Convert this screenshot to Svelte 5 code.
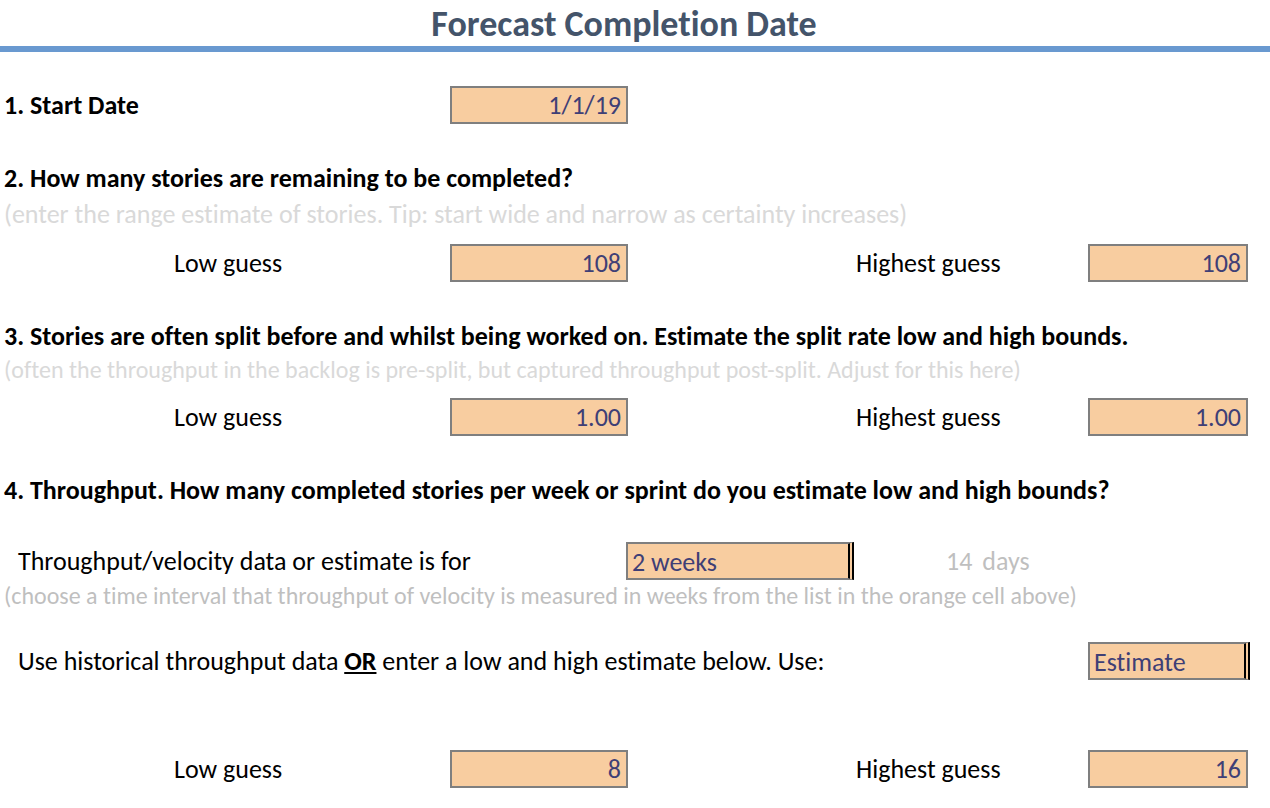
<script>
  let startDate = $state('1/1/19');
  let storiesLow = $state('108');
  let storiesHigh = $state('108');
  let splitLow = $state('1.00');
  let splitHigh = $state('1.00');
  let interval = $state('2 weeks');
  let source = $state('Estimate');
  let paceLow = $state('8');
  let paceHigh = $state('16');

  const days = $derived(parseInt(interval) * 7);
</script>

<main>
  <header><h1>Forecast Completion Date</h1></header>

  <section class="start">
    <div class="row">
      <h2 class="wide"><label for="start-date">1. Start Date</label></h2>
      <input id="start-date" class="cell low" bind:value={startDate} />
    </div>
  </section>

  <section>
    <h2>2. How many stories are remaining to be completed?</h2>
    <p class="hint roomy">(enter the range estimate of stories. Tip: start wide and narrow as certainty increases)</p>
    <div class="row">
      <label class="low-label" for="stories-low">Low guess</label>
      <input id="stories-low" class="cell low" bind:value={storiesLow} />
      <label class="high-label" for="stories-high">Highest guess</label>
      <input id="stories-high" class="cell high" bind:value={storiesHigh} />
    </div>
  </section>

  <section>
    <h2>3. Stories are often split before and whilst being worked on. Estimate the split rate low and high bounds.</h2>
    <p class="hint">(often the throughput in the backlog is pre-split, but captured throughput post-split. Adjust for this here)</p>
    <div class="row">
      <label class="low-label" for="split-low">Low guess</label>
      <input id="split-low" class="cell low" bind:value={splitLow} />
      <label class="high-label" for="split-high">Highest guess</label>
      <input id="split-high" class="cell high" bind:value={splitHigh} />
    </div>
  </section>

  <section>
    <h2>4. Throughput. How many completed stories per week or sprint do you estimate low and high bounds?</h2>
    <div class="row interval">
      <label class="question" for="interval">Throughput/velocity data or estimate is for</label>
      <select id="interval" class="cell" bind:value={interval}>
        <option>1 week</option>
        <option>2 weeks</option>
        <option>3 weeks</option>
        <option>4 weeks</option>
      </select>
      <output class="days" for="interval"><span>{days}</span><span>days</span></output>
    </div>
    <p class="hint dark">(choose a time interval that throughput of velocity is measured in weeks from the list in the orange cell above)</p>
    <div class="row source">
      <label class="question" for="source">Use historical throughput data <strong>OR</strong> enter a low and high estimate below. Use:</label>
      <select id="source" class="cell" bind:value={source}>
        <option>Estimate</option>
        <option>Data</option>
      </select>
    </div>
    <div class="row pace">
      <label class="low-label" for="pace-low">Low guess</label>
      <input id="pace-low" class="cell low" bind:value={paceLow} />
      <label class="high-label" for="pace-high">Highest guess</label>
      <input id="pace-high" class="cell high" bind:value={paceHigh} />
    </div>
  </section>
</main>

<style>
  :global(body) {
    margin: 0;
    background: #fff;
  }
  main {
    padding-bottom: 20px;
    color: #000;
    font: 26px/36px Carlito, Calibri, Lato, sans-serif;
    font-variant-ligatures: none;
  }
  header {
    padding: 2px 22px 0 0;
    border-bottom: 6px solid #6999d0;
    text-align: center;
  }
  h1 {
    margin: 0;
    color: #44546a;
    font-size: 36px;
    line-height: 44px;
  }
  section {
    margin-top: 36px;
  }
  .start {
    margin-top: 34px;
  }
  h2 {
    margin: 0;
    padding-left: 4px;
    font-size: 26px;
    font-weight: 700;
    line-height: 36px;
    white-space: nowrap;
  }
  .hint {
    margin: 0 0 12px;
    padding-left: 4px;
    color: #d9d9d9;
    font-size: 24px;
    line-height: 32px;
    white-space: nowrap;
  }
  .roomy {
    margin: 2px 0 14px;
    font-size: 26px;
  }
  .dark {
    margin-bottom: 30px;
    color: #bfbfbf;
  }
  .row {
    display: grid;
    grid-template-columns:
      minmax(0, 174fr) minmax(0, 276fr) minmax(0, 178fr) minmax(0, 228fr)
      minmax(0, 232fr) minmax(0, 160fr) minmax(0, 22fr);
    align-items: center;
  }
  .wide {
    grid-column: 1 / 3;
  }
  .low-label {
    grid-column: 2;
  }
  .low {
    grid-column: 3;
  }
  .high-label {
    grid-column: 5;
  }
  .high {
    grid-column: 6;
  }
  .cell {
    box-sizing: border-box;
    width: 100%;
    height: 38px;
    margin: 0;
    padding: 0 5px;
    border: 2px solid #7f7f7f;
    border-radius: 0;
    background: #f8cda0;
    color: #3f3f76;
    font: inherit;
    font-variant-ligatures: none;
    text-align: right;
  }
  select.cell {
    appearance: none;
    padding: 0 4px;
    border-right: 6px double #000;
    text-align: left;
  }
  .question {
    padding-left: 18px;
    white-space: nowrap;
  }
  .interval {
    grid-template-columns: minmax(0, 626fr) minmax(0, 228fr) minmax(0, 416fr);
    margin-top: 34px;
  }
  .source {
    grid-template-columns: minmax(0, 1088fr) minmax(0, 162fr) minmax(0, 20fr);
  }
  .pace {
    margin-top: 70px;
  }
  .days {
    display: flex;
    gap: 10px;
    padding-left: 92px;
    color: #bfbfbf;
  }
  strong {
    text-decoration: underline;
  }
</style>
